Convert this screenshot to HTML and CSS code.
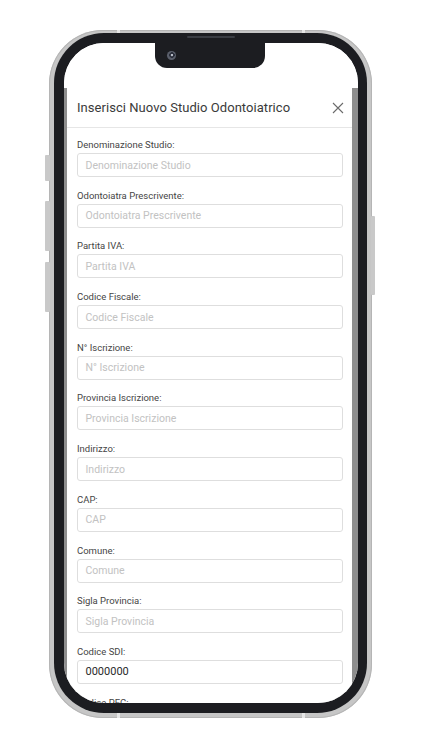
FILE: index.html
```html
<!DOCTYPE html>
<html lang="it">
<head>
<meta charset="utf-8">
<title>Inserisci Nuovo Studio Odontoiatrico</title>
<link rel="stylesheet" href="styles.css">
</head>
<body>
<div class="phone">
  <span class="btn btn-l1"></span>
  <span class="btn btn-l2"></span>
  <span class="btn btn-l3"></span>
  <span class="btn btn-r1"></span>
  <span class="band band-t1"></span>
  <span class="band band-t2"></span>
  <span class="band band-b1"></span>
  <span class="band band-b2"></span>
  <div class="bezel">
    <span class="speaker"></span>
    <div class="screen">
      <div class="notch"><span class="camera"></span></div>
      <div class="status"></div>
      <div class="backdrop">
        <div class="modal">
          <div class="modal-header">
            <h1 class="modal-title">Inserisci Nuovo Studio Odontoiatrico</h1>
            <svg class="close" width="12" height="12" viewBox="0 0 12 12"><path d="M1 1 L11 11 M11 1 L1 11" stroke="#6b6b6b" stroke-width="1.1" fill="none"/></svg>
          </div>
          <div class="modal-body">
            <div class="field"><label>Denominazione Studio:</label><div class="input ph">Denominazione Studio</div></div>
            <div class="field"><label>Odontoiatra Prescrivente:</label><div class="input ph">Odontoiatra Prescrivente</div></div>
            <div class="field"><label>Partita IVA:</label><div class="input ph">Partita IVA</div></div>
            <div class="field"><label>Codice Fiscale:</label><div class="input ph">Codice Fiscale</div></div>
            <div class="field"><label>N° Iscrizione:</label><div class="input ph">N° Iscrizione</div></div>
            <div class="field"><label>Provincia Iscrizione:</label><div class="input ph">Provincia Iscrizione</div></div>
            <div class="field"><label>Indirizzo:</label><div class="input ph">Indirizzo</div></div>
            <div class="field"><label>CAP:</label><div class="input ph">CAP</div></div>
            <div class="field"><label>Comune:</label><div class="input ph">Comune</div></div>
            <div class="field"><label>Sigla Provincia:</label><div class="input ph">Sigla Provincia</div></div>
            <div class="field"><label>Codice SDI:</label><div class="input val">0000000</div></div>
            <div class="field"><label>Codice PEC:</label><div class="input ph">Codice PEC</div></div>
          </div>
        </div>
      </div>
    </div>
  </div>
</div>
</body>
</html>
```

FILE: styles.css
```css
* { box-sizing: border-box; }
html, body { margin: 0; padding: 0; background: #fff; }
body {
  width: 422px;
  height: 750px;
  overflow: hidden;
  padding: 30px 0 0 49px;
  font-family: Roboto, "Liberation Sans", sans-serif;
}
.phone {
  position: relative;
  width: 323px;
  height: 688px;
  border-radius: 54px;
  background: #c6c6c6;
  box-shadow: inset 0 0 0 1px #b5b5b5;
  padding: 3px 5px 5px 5px;
}
.btn {
  position: absolute;
  background: #c9c9c9;
  border-radius: 1px;
}
.btn-l1 { left: -4px; top: 125px; width: 5px; height: 26px; }
.btn-l2 { left: -4px; top: 171px; width: 5px; height: 50px; }
.btn-l3 { left: -4px; top: 232px; width: 5px; height: 50px; }
.btn-r1 { right: -3px; top: 186px; width: 4px; height: 79px; }
.band { position: absolute; background: #e6e6e6; }
.band-t1 { top: 0; left: 68px; width: 3px; height: 4px; }
.band-t2 { top: 0; left: 253px; width: 3px; height: 4px; }
.band-b1 { bottom: 0; left: 68px; width: 3px; height: 5px; }
.band-b2 { bottom: 0; left: 253px; width: 3px; height: 5px; }
.bezel {
  position: relative;
  height: 100%;
  border-radius: 50px;
  background: #1c1d21;
  padding: 10px 9.5px 10px 9.5px;
}
.speaker {
  position: absolute;
  top: 3px;
  left: 133px;
  width: 48px;
  height: 2px;
  border-radius: 1px;
  background: #3a3d43;
}
.screen {
  position: relative;
  height: 100%;
  background: #fff;
  border-radius: 40px;
  overflow: hidden;
  display: flex;
  flex-direction: column;
}
.notch {
  position: absolute;
  top: 0;
  left: 91.5px;
  width: 110px;
  height: 25px;
  background: #1c1d21;
  border-radius: 0 0 12px 12px;
}
.camera {
  position: absolute;
  left: 12px;
  top: 8px;
  width: 9px;
  height: 9px;
  border-radius: 50%;
  background: radial-gradient(circle at 55% 45%, #b8bcc6 0 1px, #2a2e3a 1.6px 2.6px, #5a5f6b 3px 4.5px);
}
.status { height: 45px; flex: none; background: #fff; }
.backdrop {
  flex: 1;
  background: #8e8e8e;
  padding: 0 5.5px 0 3.5px;
  min-height: 0;
}
.modal {
  background: #fff;
  height: 100%;
}
.modal-header {
  height: 40px;
  border-bottom: 1px solid #e6e6e6;
  display: flex;
  align-items: center;
  justify-content: space-between;
  padding: 0 8px 0 10px;
}
.modal-title {
  margin: 0;
  font-size: 13px;
  font-weight: 400;
  color: #3a3a3a;
  letter-spacing: 0.05px;
}
.close { display: block; margin-top: 1px; }
.modal-body {
  padding: 11px 9px 0 10px;
}
.field { margin-bottom: 12.7px; }
.field label {
  display: block;
  font-size: 9.5px;
  line-height: 12px;
  color: #454545;
  margin-bottom: 2px;
}
.input {
  height: 24px;
  border: 1px solid #dedede;
  border-radius: 3px;
  padding: 0 7.5px;
  display: flex;
  align-items: center;
  font-size: 10.5px;
}
.ph { color: #c2c2c2; }
.val { color: #2a2a2a; font-size: 11px; }
```
